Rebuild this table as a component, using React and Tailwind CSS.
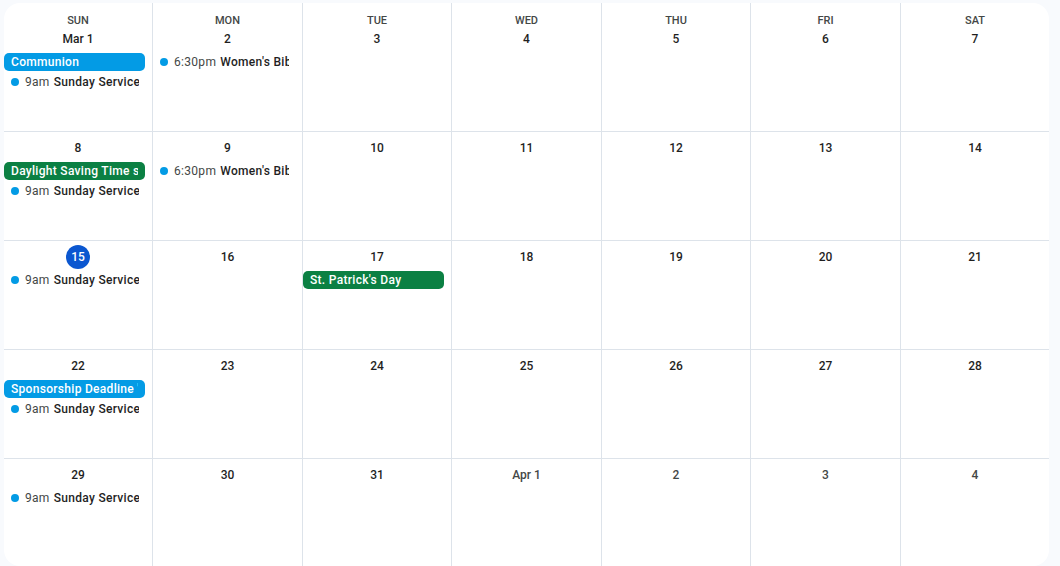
import React from 'react'

const DAYS = ['SUN', 'MON', 'TUE', 'WED', 'THU', 'FRI', 'SAT']

// blue = peacock, green = basil
const CHIP = {
  blue: 'bg-[#039be5]',
  green: 'bg-[#0b8043]',
}

const weeks = [
  [
    { label: 'Mar 1', events: [{ chip: 'blue', title: 'Communion' }, { time: '9am', title: 'Sunday Service' }] },
    { label: '2', events: [{ time: '6:30pm', title: "Women's Bible Study" }] },
    { label: '3' }, { label: '4' }, { label: '5' }, { label: '6' }, { label: '7' },
  ],
  [
    { label: '8', events: [{ chip: 'green', title: 'Daylight Saving Time starts' }, { time: '9am', title: 'Sunday Service' }] },
    { label: '9', events: [{ time: '6:30pm', title: "Women's Bible Study" }] },
    { label: '10' }, { label: '11' }, { label: '12' }, { label: '13' }, { label: '14' },
  ],
  [
    { label: '15', today: true, events: [{ time: '9am', title: 'Sunday Service' }] },
    { label: '16' },
    { label: '17', events: [{ chip: 'green', title: "St. Patrick's Day" }] },
    { label: '18' }, { label: '19' }, { label: '20' }, { label: '21' },
  ],
  [
    { label: '22', events: [{ chip: 'blue', title: "Sponsorship Deadline 'Spring Gala'" }, { time: '9am', title: 'Sunday Service' }] },
    { label: '23' }, { label: '24' }, { label: '25' }, { label: '26' }, { label: '27' }, { label: '28' },
  ],
  [
    { label: '29', events: [{ time: '9am', title: 'Sunday Service' }] },
    { label: '30' }, { label: '31' },
    { label: 'Apr 1', muted: true }, { label: '2', muted: true }, { label: '3', muted: true }, { label: '4', muted: true },
  ],
]

const Event = ({ ev }) => {
  if (ev.chip) {
    return (
      <div className={`${CHIP[ev.chip]} h-[18px] mr-[7px] rounded-[5px] pl-[7px] pr-[7px] text-white text-[12px] leading-[18px] font-medium tracking-[0.3px]`}>
        <div className="overflow-hidden whitespace-nowrap">{ev.title}</div>
      </div>
    )
  }
  return (
    <div className="h-[18px] mr-[13px] pl-[7px] flex items-center overflow-hidden whitespace-nowrap text-[12px] leading-[18px] tracking-[0.3px]">
      <span className="w-[8px] h-[8px] rounded-full bg-[#039be5] shrink-0" />
      <span className="ml-[6px] text-[#444746]">{ev.time}</span>
      <span className="ml-[4px] text-[#1f1f1f] font-medium">{ev.title}</span>
    </div>
  )
}

const DayCell = ({ day, header, col }) => (
  <div className={`flex flex-col min-w-0 ${header ? '' : 'pt-[4px]'} ${col > 0 ? 'border-l border-[#dde3ea]' : ''}`}>
    {header && (
      <div className="h-[24px] pt-[12px] text-center text-[11px] leading-[12px] font-medium text-[#444746]">
        {header}
      </div>
    )}
    <div className="h-[24px] flex justify-center items-center">
      {day.today ? (
        <span className="w-[24px] h-[24px] rounded-full bg-[#0b57d0] text-white text-[12px] font-medium flex items-center justify-center">
          {day.label}
        </span>
      ) : (
        <span className={`text-[12px] font-medium ${day.muted ? 'text-[#444746]' : 'text-[#1f1f1f]'}`}>{day.label}</span>
      )}
    </div>
    <div className="flex flex-col gap-[2px] mt-[2px]">
      {(day.events || []).map((ev, i) => <Event key={i} ev={ev} />)}
    </div>
  </div>
)

export default function App() {
  return (
    <div className="w-[1060px] h-[566px] bg-[#f8fafd] pt-[3px] pl-[4px] overflow-hidden font-['Roboto',sans-serif]">
      <div className="w-[1045px] h-[563px] bg-white rounded-[16px] overflow-hidden">
        {weeks.map((week, w) => (
          <div
            key={w}
            className={`grid grid-cols-[148px_150px_149px_150px_149px_150px_149px] ${w === 0 ? 'h-[128px]' : 'h-[109px] border-t border-[#dde3ea]'}`}
          >
            {week.map((day, c) => (
              <DayCell key={c} day={day} col={c} header={w === 0 ? DAYS[c] : null} />
            ))}
          </div>
        ))}
      </div>
    </div>
  )
}
